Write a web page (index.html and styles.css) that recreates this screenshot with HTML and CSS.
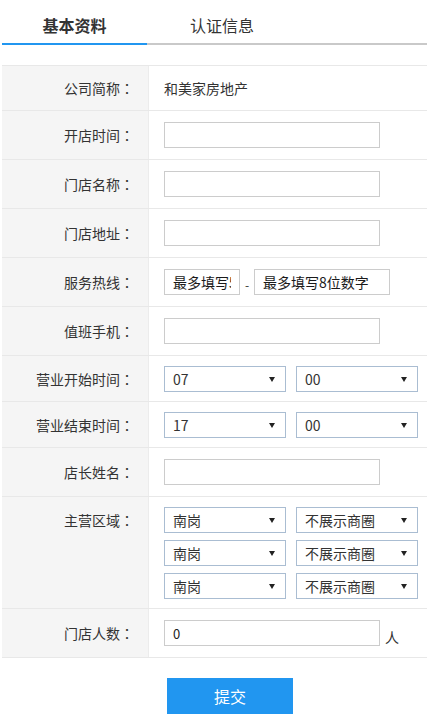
FILE: index.html
```html
<!DOCTYPE html>
<html lang="zh-CN">
<head>
<meta charset="utf-8">
<title>基本资料</title>
<link rel="stylesheet" href="styles.css">
</head>
<body>
<div class="page">
  <div class="tabs">
    <div class="tab active">基本资料</div>
    <div class="tab">认证信息</div>
  </div>

  <div class="form">
    <div class="row row-text">
      <div class="label">公司简称<span class="colon" lang="zh-TW">：</span></div>
      <div class="field">和美家房地产</div>
    </div>
    <div class="row">
      <div class="label">开店时间<span class="colon" lang="zh-TW">：</span></div>
      <div class="field"><input class="ipt" type="text"></div>
    </div>
    <div class="row">
      <div class="label">门店名称<span class="colon" lang="zh-TW">：</span></div>
      <div class="field"><input class="ipt" type="text"></div>
    </div>
    <div class="row">
      <div class="label">门店地址<span class="colon" lang="zh-TW">：</span></div>
      <div class="field"><input class="ipt" type="text"></div>
    </div>
    <div class="row">
      <div class="label">服务热线<span class="colon" lang="zh-TW">：</span></div>
      <div class="field">
        <input class="ipt ipt-area" type="text" placeholder="最多填写5位数字">
        <span class="dash">-</span>
        <input class="ipt ipt-tel" type="text" placeholder="最多填写8位数字">
      </div>
    </div>
    <div class="row">
      <div class="label">值班手机<span class="colon" lang="zh-TW">：</span></div>
      <div class="field"><input class="ipt" type="text"></div>
    </div>
    <div class="row row-sel">
      <div class="label">营业开始时间<span class="colon" lang="zh-TW">：</span></div>
      <div class="field">
        <div class="pair">
          <span class="sel"><select><option>07</option></select></span>
          <span class="sel"><select><option>00</option></select></span>
        </div>
      </div>
    </div>
    <div class="row row-sel">
      <div class="label">营业结束时间<span class="colon" lang="zh-TW">：</span></div>
      <div class="field">
        <div class="pair">
          <span class="sel"><select><option>17</option></select></span>
          <span class="sel"><select><option>00</option></select></span>
        </div>
      </div>
    </div>
    <div class="row">
      <div class="label">店长姓名<span class="colon" lang="zh-TW">：</span></div>
      <div class="field"><input class="ipt" type="text"></div>
    </div>
    <div class="row row-sel">
      <div class="label">主营区域<span class="colon" lang="zh-TW">：</span></div>
      <div class="field field-stack">
        <div class="pair">
          <span class="sel"><select><option>南岗</option></select></span>
          <span class="sel"><select><option>不展示商圈</option></select></span>
        </div>
        <div class="pair">
          <span class="sel"><select><option>南岗</option></select></span>
          <span class="sel"><select><option>不展示商圈</option></select></span>
        </div>
        <div class="pair">
          <span class="sel"><select><option>南岗</option></select></span>
          <span class="sel"><select><option>不展示商圈</option></select></span>
        </div>
      </div>
    </div>
    <div class="row">
      <div class="label">门店人数<span class="colon" lang="zh-TW">：</span></div>
      <div class="field field-unit">
        <input class="ipt ipt-num" type="text" value="0">
        <span class="unit">人</span>
      </div>
    </div>
  </div>

  <div class="actions">
    <button class="btn" type="button">提交</button>
  </div>
</div>
</body>
</html>
```

FILE: styles.css
```css
html, body {
  margin: 0;
  padding: 0;
  background: #ffffff;
}

body {
  font-family: "Noto Sans CJK SC", "Liberation Sans", sans-serif;
  font-size: 14px;
  color: #333333;
}

.page {
  padding: 0 2px;
}

/* Tabs */
.tabs {
  display: flex;
  border-bottom: 2px solid #c9c9c9;
}

.tab {
  width: 145px;
  padding: 9px 0 2px;
  line-height: 32px;
  font-size: 16px;
  text-align: center;
  color: #333333;
}

.tab + .tab {
  width: 150px;
}

.tab.active {
  font-weight: bold;
  border-bottom: 2px solid #2196f0;
  margin-bottom: -2px;
}

/* Form table */
.form {
  margin-top: 20px;
  border-bottom: 1px solid #e8e8e8;
}

.row {
  display: flex;
  border-top: 1px solid #e8e8e8;
}

.label {
  flex: none;
  width: 147px;
  box-sizing: border-box;
  background: #f5f5f5;
  border-right: 1px solid #ececec;
  text-align: right;
  padding: 11px 14px 11px 0;
  line-height: 26px;
  white-space: nowrap;
  color: #333333;
}

.colon {
  font-family: "Noto Sans CJK TC", "Noto Sans CJK SC", sans-serif;
}

.field {
  flex: 1;
  display: flex;
  align-items: center;
  padding: 11px 0 11px 15px;
  line-height: 26px;
  min-width: 0;
}

.row-text .label,
.row-text .field {
  padding-top: 0;
  padding-bottom: 0;
  line-height: 44px;
}

.row-sel .label,
.row-sel .field {
  padding-top: 10px;
  padding-bottom: 9px;
}

/* Inputs */
.ipt {
  display: block;
  width: 216px;
  height: 26px;
  box-sizing: border-box;
  border: 1px solid #cccccc;
  padding: 0 8px;
  margin: 0;
  font-family: inherit;
  font-size: 14px;
  color: #222222;
  background: #ffffff;
  outline: none;
}

.ipt::placeholder {
  color: #1a1a1a;
  opacity: 1;
}

.ipt-area {
  width: 76px;
}

.ipt-tel {
  width: 136px;
}

.ipt-num {
  font-size: 13px;
}

.dash {
  width: 14px;
  text-align: center;
  font-size: 12px;
  line-height: 14px;
  margin-top: 6px;
  color: #333333;
}

/* Selects */
.field-stack {
  flex-direction: column;
  align-items: flex-start;
  gap: 7px;
}

.pair {
  display: flex;
  gap: 10px;
}

.sel {
  position: relative;
  display: block;
  width: 122px;
  height: 26px;
}

.sel select {
  -webkit-appearance: none;
  appearance: none;
  display: block;
  width: 100%;
  height: 26px;
  box-sizing: border-box;
  margin: 0;
  border: 1px solid #aabdd2;
  border-radius: 0;
  padding: 0 20px 0 8px;
  background: #ffffff;
  font-family: inherit;
  font-size: 14px;
  color: #333333;
  outline: none;
}

.sel::after {
  content: "";
  position: absolute;
  right: 11px;
  top: 11px;
  border-left: 3px solid transparent;
  border-right: 3px solid transparent;
  border-top: 5px solid #222222;
  pointer-events: none;
}

/* Unit */
.field-unit {
  align-items: flex-end;
}

.unit {
  margin-left: 5px;
  line-height: 18px;
  color: #333333;
}

/* Submit */
.actions {
  padding: 20px 0 0 165px;
}

.btn {
  display: block;
  width: 126px;
  height: 36px;
  border: none;
  border-radius: 0;
  background: #2196f0;
  color: #ffffff;
  font-family: inherit;
  font-size: 16px;
  padding: 0;
  cursor: pointer;
}
```
